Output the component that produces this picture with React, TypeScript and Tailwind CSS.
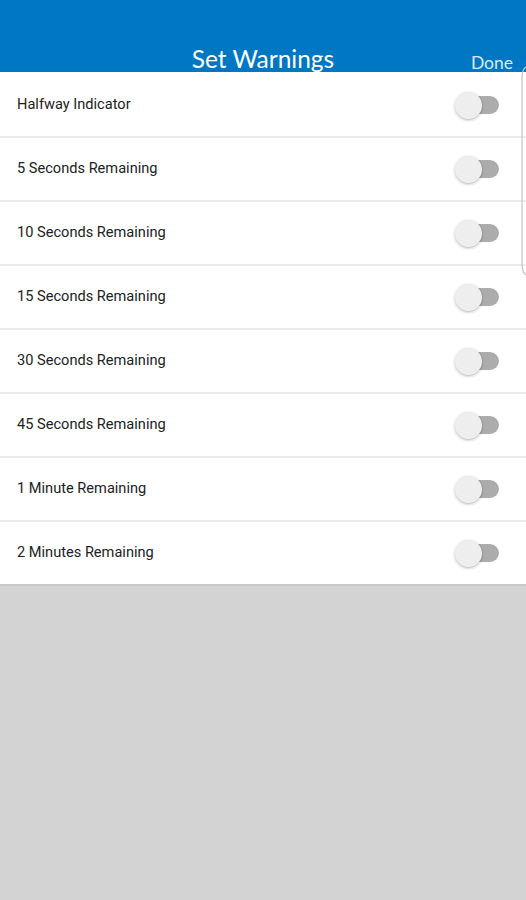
import React from "react";

const rows = [
  "Halfway Indicator",
  "5 Seconds Remaining",
  "10 Seconds Remaining",
  "15 Seconds Remaining",
  "30 Seconds Remaining",
  "45 Seconds Remaining",
  "1 Minute Remaining",
  "2 Minutes Remaining",
];

function Toggle() {
  return (
    <div className="relative w-[46px] h-[28px] flex items-center">
      <div className="absolute left-[10px] right-[2px] h-[18px] rounded-full bg-[#acacac]" />
      <div className="absolute left-0 w-[27px] h-[27px] rounded-full bg-[#eeeeee] shadow-[0_1px_3px_rgba(0,0,0,0.3)]" />
    </div>
  );
}

export default function App() {
  return (
    <div className="relative w-[526px] h-[900px] bg-[#d3d3d3] flex flex-col" style={{ fontFamily: "Roboto, 'Liberation Sans', sans-serif" }}>
      <div className="h-[72px] bg-[#0077c2] relative flex items-end justify-center shrink-0 overflow-hidden">
        <div className="text-white text-[24.5px] leading-[24px] mb-[1px]" style={{ fontFamily: "Lato, 'Open Sans', sans-serif" }}>Set Warnings</div>
        <div className="absolute right-[13px] bottom-[1px] text-[#dbe9f5] text-[17.5px] leading-none" style={{ fontFamily: "Lato, 'Open Sans', sans-serif" }}>Done</div>
      </div>
      <div className="bg-white flex flex-col pt-[2px]">
        {rows.map((r, i) => (
          <div key={r} className={`h-[64px] flex items-center justify-between pl-[17px] pr-[25px] ${i < rows.length - 1 ? "border-b-2 border-[#ececec]" : "border-b-2 border-[#c8c8c8]"}`}>
            <span className="text-[14.6px] text-[#222222]">{r}</span>
            <Toggle />
          </div>
        ))}
      </div>
      <svg className="absolute left-[516px] top-[66px]" width="10" height="210" viewBox="0 0 10 210">
        <path d="M10 1 Q6 3 6 12 L6 198 Q6 206 10 209" fill="none" stroke="#c4c4c4" strokeWidth="1.2" />
      </svg>
    </div>
  );
}
